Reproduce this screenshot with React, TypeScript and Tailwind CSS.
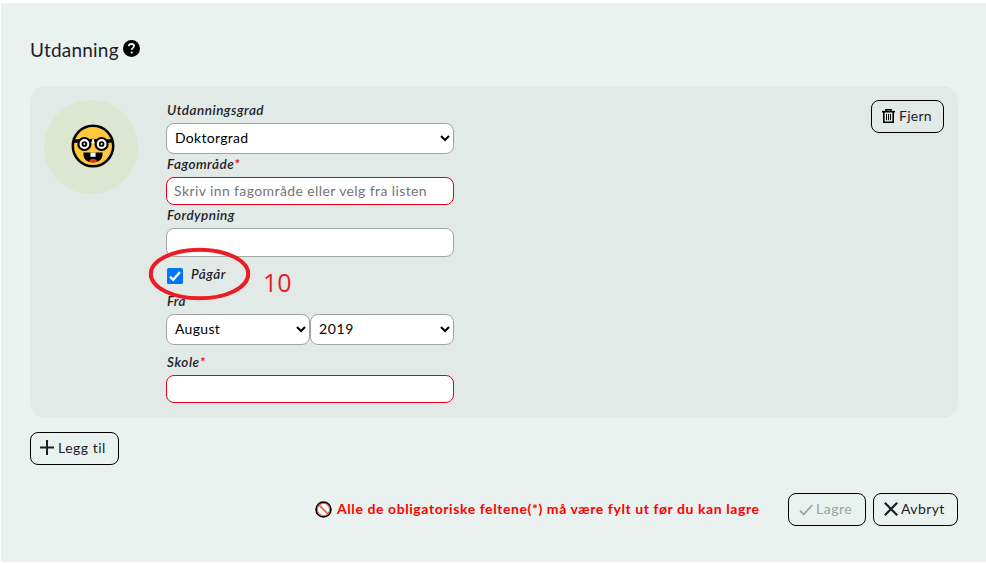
import type { ReactNode } from "react";

function Label({ children, className = "" }: { children: ReactNode; className?: string }) {
  return (
    <div className={`flex items-center whitespace-nowrap text-[13.5px] font-semibold italic leading-none text-[#1d1d27] ${className}`}>
      {children}
    </div>
  );
}

function Select({ value, className = "" }: { value: string; className?: string }) {
  return (
    <select
      defaultValue={value}
      className={`h-[31px] rounded-lg border border-[#a3a3a3] bg-white pb-[2px] pl-1 pr-px text-[14px] text-black ${className}`}
    >
      <option>{value}</option>
    </select>
  );
}

function Button({ children, className = "" }: { children: ReactNode; className?: string }) {
  return (
    <button className={`flex h-[33px] shrink-0 items-center whitespace-nowrap rounded-lg border border-black text-[14px] text-[#1d1d27] ${className}`}>
      {children}
    </button>
  );
}

function HelpIcon() {
  return (
    <svg width="17" height="17" viewBox="0 0 17 17" className="ml-[4px] -mt-[3px]">
      <circle cx="8.5" cy="8.5" r="8.5" fill="#000" />
      <path d="M5.8 6.3C5.9 4.8 7 4 8.5 4s2.6.8 2.6 2.1c0 1.8-2.4 1.8-2.4 3.7" fill="none" stroke="#e9f2ef" strokeWidth="1.8" />
      <circle cx="8.7" cy="12.6" r="1.1" fill="#e9f2ef" />
    </svg>
  );
}

function NerdFace() {
  return (
    <svg width="44" height="44" viewBox="0 0 44 44">
      <circle cx="22" cy="22" r="20.2" fill="#ffc83d" stroke="#000" strokeWidth="2.5" />
      <path d="M2 17h7M35 17h7" stroke="#000" strokeWidth="3.4" />
      <path d="M17 15.6q5-1.6 10 0v3.2q-5-2-10 0z" fill="#000" />
      <path d="M20.9 15.2h2.2v4h-2.2z" fill="#fff" />
      <circle cx="13.4" cy="20" r="6" fill="#fff" stroke="#000" strokeWidth="2.2" />
      <circle cx="30.6" cy="20" r="6" fill="#fff" stroke="#000" strokeWidth="2.2" />
      <circle cx="13.4" cy="20" r="1.9" fill="#fff" stroke="#000" strokeWidth="1.9" />
      <circle cx="30.6" cy="20" r="1.9" fill="#fff" stroke="#000" strokeWidth="1.9" />
      <path d="M12.5 28.4h19v2c0 5-4.2 8-9.5 8s-9.5-3-9.5-8z" fill="#000" />
      <path d="M18 37.4c.8-1.7 2.3-2.3 4-2.3s3.5.6 4.3 2.3c-2.5 1-5.8 1-8.3 0z" fill="#f03a17" />
      <path d="M19.4 28.4h5.2v4.3h-5.2z" fill="#fff" />
    </svg>
  );
}

function TrashIcon() {
  return (
    <svg width="13" height="14" viewBox="0 0 13 14" fill="none" stroke="#000" className="mr-[4px] -mt-px">
      <path d="M0 2.7h13" strokeWidth="1.6" />
      <path d="M4 2.5V.7h5v1.8M1.8 3v10.2h9.4V3" strokeWidth="1.6" />
      <path d="M4.5 5v6.2M6.5 5v6.2M8.5 5v6.2" strokeWidth="1" />
    </svg>
  );
}

export default function App() {
  return (
    <div className="h-[563px] w-[986px] overflow-hidden bg-white pl-px pt-[3px] font-['Lato','Liberation_Sans',sans-serif]">
      <main className="flex h-[559px] flex-col bg-[#e9f2ef] pl-[29px] pr-[27px] pt-[33px]">
        <header className="flex h-[28px] items-center text-[#1d1d27]">
          <h1 className="w-[89px] whitespace-nowrap text-[19px] tracking-[0.2px]">Utdanning</h1>
          <HelpIcon />
        </header>

        <section className="mt-[22px] flex h-[332px] w-[928px] items-start rounded-[15px] bg-[#e2eae7] pl-[14px] pr-[14px] pt-[14px]">
          <div className="flex h-[94px] w-[94px] items-center justify-center rounded-full bg-[#dbe7d0]">
            <div className="mr-[-3px] -mt-[3px]"><NerdFace /></div>
          </div>

          <form className="relative ml-[28px] flex w-[288px] flex-col">
            <Label className="h-[23px] pb-[2px] pl-px tracking-[0.48px]">Utdanningsgrad</Label>
            <Select value="Doktorgrad" className="w-full tracking-[0.28px]" />
            <Label className="h-[23px] pb-[2px] pl-px tracking-[0.5px]">
              Fagområde<span className="text-[#e2001a]">*</span>
            </Label>
            <input
              placeholder="Skriv inn fagområde eller velg fra listen"
              className="h-[28px] rounded-lg border border-[#e2001a] bg-white px-[7px] pb-[2px] text-[14px] tracking-[0.4px] placeholder:text-[#757575]"
            />
            <Label className="h-[23px] pb-[2px] pl-px tracking-[0.45px]">Fordypning</Label>
            <input className="h-[29px] rounded-lg border border-[#a3a3a3] bg-white px-[7px]" />
            <div className="flex h-[34px] items-start pl-px pt-[11px]">
              <svg width="16" height="16" viewBox="0 0 16 16">
                <rect width="16" height="16" rx="1.5" fill="#0075ff" />
                <path d="M3 8.6l3.2 3.2L13 4" fill="none" stroke="#fff" strokeWidth="2.3" />
              </svg>
              <Label className="ml-[8px] tracking-[0.5px]">Pågår</Label>
            </div>
            <Label className="h-[23px] pb-[2px] pl-px tracking-[0.3px]">Fra</Label>
            <div className="flex">
              <Select value="August" className="w-[144px] tracking-[0.3px]" />
              <Select value="2019" className="w-[144px] tracking-[0.6px]" />
            </div>
            <Label className="h-[30px] pl-px pt-[5px] tracking-[0.6px]">
              Skole<span className="text-[#e2001a]">*</span>
            </Label>
            <input className="h-[28px] rounded-lg border border-[#e2001a] bg-white px-[7px]" />

            <svg className="absolute left-[-18px] top-[147px]" width="103" height="54" viewBox="0 0 103 54">
              <ellipse cx="51.5" cy="27" rx="48.7" ry="24.3" fill="none" stroke="#ed1c24" strokeWidth="4" />
            </svg>
            <span className="absolute left-[97px] top-[168px] font-['Open_Sans','Noto_Sans',sans-serif] text-[25px] leading-[28px] text-[#ed1c24]">10</span>
          </form>

          <Button className="ml-auto w-[73px] pl-[10px] tracking-[0.25px]">
            <TrashIcon />
            <span className="-mt-[2px]">Fjern</span>
          </Button>
        </section>

        <Button className="mt-[14px] w-[89px] pl-[9px] tracking-[0.5px]">
          <svg width="14" height="15" viewBox="0 0 14 15" stroke="#1d1d27" strokeWidth="2" className="mr-[4px] -mt-[2px]">
            <path d="M7 0v15M0 7.5h14" />
          </svg>
          <span className="-mt-[2px]">Legg til</span>
        </Button>

        <footer className="mt-[28px] flex h-[33px] w-[928px] items-center justify-end">
          <svg width="17" height="17" viewBox="0 0 17 17" className="mr-[5px] -mt-px">
            <circle cx="8.5" cy="8.5" r="7.4" fill="#fff" stroke="#000" strokeWidth="1.7" />
            <circle cx="8.5" cy="8.5" r="6.1" fill="none" stroke="#e8492c" />
            <path d="M4 4l9 9" stroke="#b8452e" strokeWidth="1.5" />
            <path d="M4 4l9 9" stroke="#ff6a50" strokeWidth="0.7" />
          </svg>
          <p className="-mt-[2px] w-[423px] whitespace-nowrap text-[14px] font-bold tracking-[0.58px] text-[#ff0000]">
            Alle de obligatoriske feltene(*) må være fylt ut før du kan lagre
          </p>
          <Button className="ml-[28px] w-[78px] pl-[10px] tracking-[0.5px]">
            <svg width="14" height="12" viewBox="0 0 14 12" fill="none" stroke="#9da3a1" strokeWidth="1.7" className="mr-[3px]">
              <path d="M1 6.7l3.7 3.7L13.3 1" />
            </svg>
            <span className="-mt-[2px] text-[#9da3a1]">Lagre</span>
          </Button>
          <Button className="ml-[7px] w-[85px] pl-[10px] tracking-[0.4px]">
            <svg width="14" height="14" viewBox="0 0 14 14" stroke="#1d1d27" strokeWidth="2.2" className="mr-[3px] -mt-px">
              <path d="M.8.8l12.4 12.4M13.2.8L.8 13.2" />
            </svg>
            <span className="-mt-[2px]">Avbryt</span>
          </Button>
        </footer>
      </main>
    </div>
  );
}
